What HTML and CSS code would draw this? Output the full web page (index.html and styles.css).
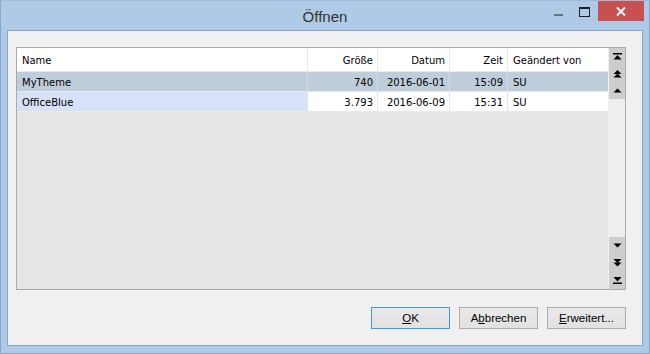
FILE: index.html
```
<!DOCTYPE html>
<html lang="de">
<head>
<meta charset="utf-8">
<title>Öffnen</title>
<link rel="stylesheet" href="styles.css">
</head>
<body>
<div class="window">
  <div class="titlebar">
    <div class="spacer"></div>
    <div class="title">Öffnen</div>
    <div class="controls">
      <div class="ctl"><span class="min-glyph"></span></div>
      <div class="ctl"><span class="max-glyph"></span></div>
      <div class="ctl close">
        <svg width="10" height="9" viewBox="0 0 10 9"><path d="M1 0.5 L9 8.5 M9 0.5 L1 8.5" stroke="#fff" stroke-width="2" fill="none"/></svg>
      </div>
    </div>
  </div>
  <div class="client">
    <div class="listbox">
      <div class="table">
        <div class="row header">
          <div class="cell">Name</div>
          <div class="cell num">Größe</div>
          <div class="cell num">Datum</div>
          <div class="cell num">Zeit</div>
          <div class="cell">Geändert von</div>
        </div>
        <div class="row selected">
          <div class="cell">MyTheme</div>
          <div class="cell num">740</div>
          <div class="cell num">2016-06-01</div>
          <div class="cell num">15:09</div>
          <div class="cell">SU</div>
        </div>
        <div class="row normal">
          <div class="cell focus">OfficeBlue</div>
          <div class="cell num">3.793</div>
          <div class="cell num">2016-06-09</div>
          <div class="cell num">15:31</div>
          <div class="cell">SU</div>
        </div>
      </div>
      <div class="scrollbar">
        <div class="sb-group">
          <div class="sb-btn"><svg width="9" height="7" viewBox="0 0 9 7"><rect x="0" y="0" width="9" height="1.5" fill="#000"/><path d="M4.5 2 L8.5 6.5 L0.5 6.5 Z" fill="#000"/></svg></div>
          <div class="sb-btn"><svg width="9" height="8" viewBox="0 0 9 8"><path d="M4.5 0 L8.5 4 L0.5 4 Z M4.5 3.5 L8.5 7.5 L0.5 7.5 Z" fill="#000"/></svg></div>
          <div class="sb-btn"><svg width="9" height="5" viewBox="0 0 9 5"><path d="M4.5 0.5 L8.5 4.5 L0.5 4.5 Z" fill="#000"/></svg></div>
        </div>
        <div class="sb-track"></div>
        <div class="sb-group bottom">
          <div class="sb-btn"><svg width="9" height="5" viewBox="0 0 9 5"><path d="M0.5 0.5 L8.5 0.5 L4.5 4.5 Z" fill="#000"/></svg></div>
          <div class="sb-btn"><svg width="9" height="8" viewBox="0 0 9 8"><path d="M0.5 0 L8.5 0 L4.5 4 Z M0.5 3.5 L8.5 3.5 L4.5 7.5 Z" fill="#000"/></svg></div>
          <div class="sb-btn"><svg width="9" height="7" viewBox="0 0 9 7"><path d="M0.5 0 L8.5 0 L4.5 4.5 Z" fill="#000"/><rect x="0" y="5.5" width="9" height="1.5" fill="#000"/></svg></div>
        </div>
      </div>
    </div>
    <div class="buttons">
      <button class="btn default"><u>O</u>K</button>
      <button class="btn">A<u>b</u>brechen</button>
      <button class="btn"><u>E</u>rweitert...</button>
    </div>
  </div>
</div>
</body>
</html>
```
FILE: styles.css
```
* { box-sizing: border-box; }
html, body { margin: 0; padding: 0; }
body {
  width: 650px;
  height: 354px;
  overflow: hidden;
  font-family: "Liberation Sans", Arial, sans-serif;
}
.window {
  width: 650px;
  height: 354px;
  background: #aecae6;
  border: 1px solid #8aa6c6;
  border-top-color: #9fbddb;
  display: flex;
  flex-direction: column;
  padding: 0 6px 7px 6px;
}
.titlebar {
  height: 29px;
  display: grid;
  grid-template-columns: 1fr auto 1fr;
  align-items: start;
}
.title {
  align-self: center;
  font-size: 15px;
  color: #333;
  padding-top: 1px;
}
.controls {
  justify-self: end;
  display: flex;
  margin-right: -1px;
}
.ctl {
  width: 26px;
  height: 20px;
  display: flex;
  align-items: center;
  justify-content: center;
}
.min-glyph {
  display: block;
  width: 9px;
  height: 2px;
  background: #6a7583;
  margin-top: 8px;
}
.max-glyph {
  display: block;
  width: 11px;
  height: 10px;
  border: 1px solid #1e1e1e;
  border-top-width: 2px;
  margin-top: 2px;
}
.close {
  width: 46px;
  background: #c75050;
  margin-left: 1px;
}
.close svg { margin-top: 1px; }
.client {
  flex: 1;
  background: #f0f0f0;
  border: 1px solid #8aa5c5;
  display: flex;
  flex-direction: column;
  padding: 16px 16px 16px 8px;
}
.listbox {
  height: 243px;
  border: 1px solid #a9a9a9;
  background: #e5e5e5;
  display: flex;
}
.table {
  flex: 1;
  display: flex;
  flex-direction: column;
  font-family: "DejaVu Sans", sans-serif;
  font-size: 10px;
  color: #000;
}
.row {
  display: grid;
  grid-template-columns: 291px 70px 72px 58px 100px;
  height: 20px;
}
.row.header { height: 24px; background: #fff; }
.cell {
  border-right: 1px solid #e6e6e6;
  border-bottom: 1px solid #e9e9e9;
  padding: 0 4px 0 5px;
  display: flex;
  align-items: center;
  white-space: nowrap;
  overflow: hidden;
}
.header .cell { padding-top: 1px; }
.row .cell:last-child { border-right: none; }
.cell.num { justify-content: flex-end; }
.selected .cell {
  background: #bfcddb;
  border-right-color: #d3dce6;
  border-bottom-color: #e6ebf0;
  padding-top: 1px;
}
.normal .cell { background: #fff; padding-top: 1px; }
.normal .cell.focus { background: #d7e1f7; }
.scrollbar {
  width: 17px;
  display: flex;
  flex-direction: column;
  border-left: 1px solid #f0f0f0;
}
.sb-group {
  height: 51px;
  background: #cdcdcd;
  display: flex;
  flex-direction: column;
}
.sb-group.bottom { height: 52px; }
.sb-btn {
  flex: 1;
  display: flex;
  align-items: center;
  justify-content: center;
}
.sb-track {
  flex: 1;
  background: repeating-conic-gradient(#f4f4f4 0 25%, #e9e9e9 0 50%) 0 0 / 2px 2px;
}
.buttons {
  margin-top: 17px;
  display: flex;
  justify-content: flex-end;
  gap: 9px;
}
.btn {
  width: 79px;
  height: 22px;
  border: 1px solid #adadad;
  background: linear-gradient(#e9e9e9, #e1e1e1);
  font-family: "Liberation Sans", Arial, sans-serif;
  font-size: 11.5px;
  color: #000;
  padding: 0;
  margin: 0;
}
.btn.default { border-color: #3c9be8; }
```
